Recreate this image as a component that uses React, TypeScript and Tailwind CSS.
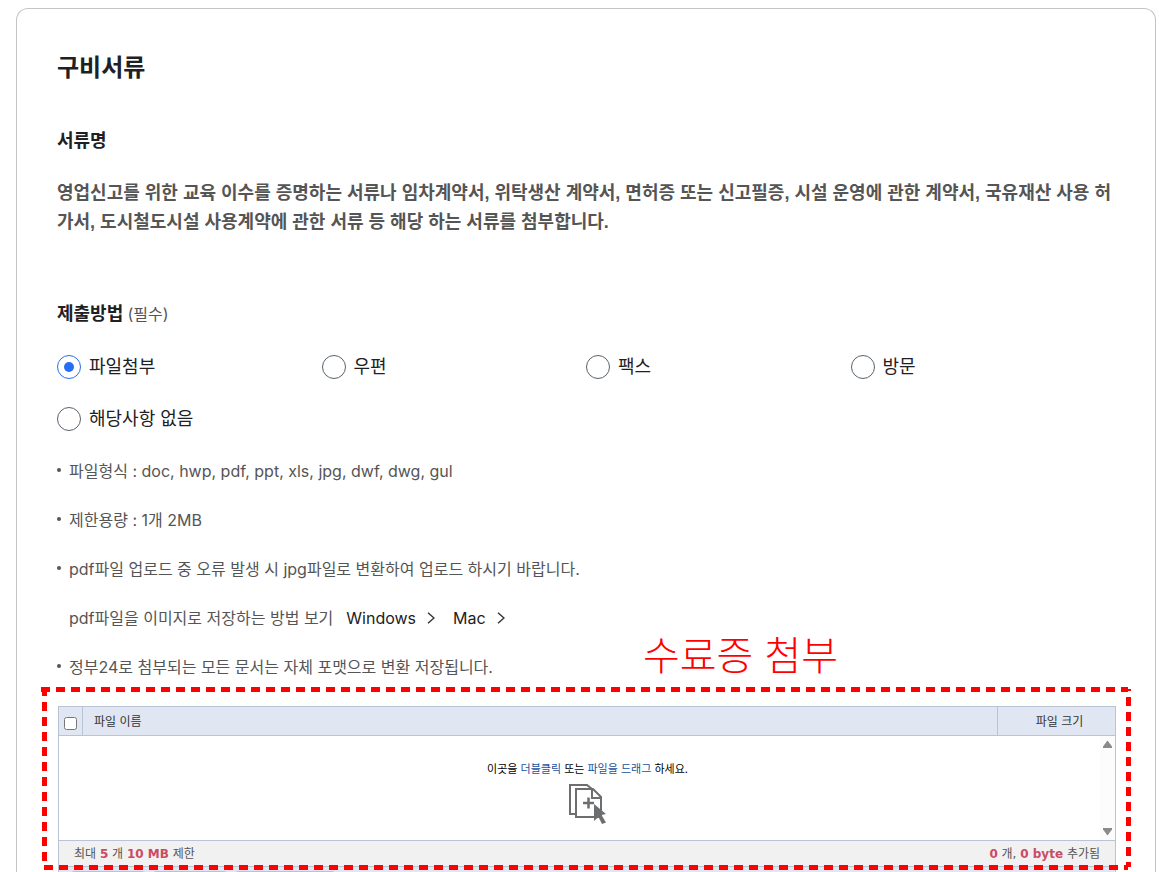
import { useState } from 'react'

const methods = [
  { id: 'file', label: '파일첨부' },
  { id: 'post', label: '우편' },
  { id: 'fax', label: '팩스' },
  { id: 'visit', label: '방문' },
  { id: 'none', label: '해당사항 없음' }
]

const Dot = () => <span className="mt-[9px] mr-2 size-1 shrink-0 rounded-full bg-[#555]"></span>

const Arrow = () => (
  <svg className="h-3 w-2" viewBox="0 0 8 12" fill="none" stroke="#33363d" strokeWidth="1.5">
    <path d="M1 0.7 L7 6 L1 11.3" />
  </svg>
)

const FileDropIcon = () => (
  <svg className="h-10 w-[38px]" viewBox="0 0 38 40" fill="none" stroke="#6d6e70" strokeWidth="2">
    <path d="M6 30 H1 V1 H18 L23 5" />
    <path d="M7 5 H24 L32 13 V33 H7 Z" fill="#fff" />
    <path d="M23 5 V14 H32" />
    <path d="M14 19 H25 M19.5 13.5 V24.5" strokeWidth="2.5" />
    <path d="M25 20 L37 30 L32.500 31 L37 38.500 L33 40 L29.500 33 L25 37 Z" fill="#6d6e70" stroke="none" />
  </svg>
)

const Uploader = () => {
  const [checked, setChecked] = useState(false)

  return (
    <div className="-mr-px ml-px border border-[#b9c3d6] text-xs">
      <div className="flex h-[29px] border-b border-[#b9c3d6] bg-[#e0e7f3] text-[#333]">
        <div className="flex w-6 shrink-0 items-end justify-center border-r border-[#b9c3d6] pb-[5px]">
          <input
            type="checkbox"
            aria-label="전체 선택"
            checked={checked}
            onChange={evt => setChecked(evt.target.checked)}
            className="size-[13px]"
          />
        </div>
        <div className="flex flex-grow items-center pt-px pl-[11px]">파일 이름</div>
        <div className="flex w-[118px] shrink-0 items-center justify-center border-l border-[#b9c3d6] pt-px pl-[6px]">
          파일 크기
        </div>
      </div>

      <div className="flex h-[104px]">
        <div className="flex flex-grow flex-col items-center pt-6 pl-4 text-black">
          <p className="text-[11px] leading-[18px]">
            이곳을 <span className="text-[#1352a2]">더블클릭</span> 또는 <span className="text-[#1352a2]">파일을 드래그</span>{' '}
            하세요.
          </p>
          <div className="mt-[6px]">
            <FileDropIcon />
          </div>
        </div>
        <div className="flex w-[15px] shrink-0 flex-col items-center justify-between bg-[#fcfcfc] py-1">
          <svg className="h-2 w-[9px]" viewBox="0 0 9 8" fill="#8a8a8a">
            <path d="M4.500 0.500 L9 6.500 V8 H0 V6.500 Z" />
          </svg>
          <svg className="h-2 w-[9px]" viewBox="0 0 9 8" fill="#8a8a8a">
            <path d="M4.500 7.500 L9 1.500 V0 H0 V1.500 Z" />
          </svg>
        </div>
      </div>

      <div className="flex h-[27px] items-center justify-between border-y border-[#b9c3d6] bg-[#f1f1f1] px-[15px] pt-px font-['DejaVu_Sans','Noto_Sans_CJK_KR',sans-serif] text-[#555]">
        <p>
          최대 <b className="text-[#cb4b63]">5</b> 개 <b className="text-[#cb4b63]">10 MB</b> 제한
        </p>
        <p>
          <b className="text-[#cb4b63]">0</b> 개, <b className="text-[#cb4b63]">0 byte</b> 추가됨
        </p>
      </div>

      <div className="flex h-8 gap-[6px] bg-[#e0e7f3] px-[11px] pt-1">
        <button aria-label="파일 추가" className="h-6 w-[76px] rounded-sm border border-[#b9c3d6]"></button>
        <button aria-label="폴더 추가" className="h-6 w-[76px] rounded-sm border border-[#b9c3d6]"></button>
        <button aria-label="항목 제거" className="h-6 w-[102px] rounded-sm border border-[#b9c3d6]"></button>
      </div>
    </div>
  )
}

// red dashed frame around the uploader
const Frame = () => (
  <svg
    className="pointer-events-none absolute -top-[17px] -left-[13px] h-[178px] w-[calc(100%+26px)] overflow-visible"
    stroke="#f00"
    strokeWidth="5"
    strokeDasharray="9 6"
    shapeRendering="crispEdges"
  >
    <line x1="-3" y1="0" x2="100%" y2="0" />
    <line x1="0" y1="-2" x2="0" y2="100%" />
    <line x1="0" y1="100%" x2="100%" y2="100%" />
    <line x1="100%" y1="0" x2="100%" y2="100%" strokeDashoffset="7" />
  </svg>
)

const App = () => {
  const [method, setMethod] = useState('file')

  return (
    <div className="h-screen overflow-hidden bg-white pt-2 pr-[3px] pl-4 font-['Inter','Noto_Sans_CJK_KR',sans-serif]">
      <section className="h-full rounded-t-xl border border-b-0 border-[#c4c4c4] px-10 pt-[41px] text-[#1e2124]">
        <h2 className="text-2xl leading-9 font-bold">구비서류</h2>

        <h3 className="mt-[41px] text-lg leading-7 font-bold">서류명</h3>
        <p className="mt-6 font-['Liberation_Sans','Noto_Sans_CJK_KR',sans-serif] text-lg leading-[29px] font-bold text-[#555]">
          영업신고를 위한 교육 이수를 증명하는 서류나 임차계약서, 위탁생산 계약서, 면허증 또는 신고필증, 시설 운영에 관한
          계약서, 국유재산 사용 허가서, 도시철도시설 사용계약에 관한 서류 등 해당 하는 서류를 첨부합니다.
        </p>

        <fieldset className="mt-[63px]">
          <legend className="text-lg leading-7 font-bold">
            제출방법 <span className="text-base font-normal text-[#555]">(필수)</span>
          </legend>
          <div className="mt-[25px] grid grid-cols-4 gap-y-6">
            {methods.map(item => (
              <label key={item.id} className="flex h-7 items-center gap-2 text-lg">
                <input
                  type="radio"
                  name="method"
                  checked={method === item.id}
                  onChange={() => setMethod(item.id)}
                  className="flex size-6 appearance-none items-center justify-center rounded-full border border-[#58616a] before:size-[10px] before:rounded-full checked:border-[#256ef4] checked:before:bg-[#256ef4]"
                />
                {item.label}
              </label>
            ))}
          </div>
        </fieldset>

        <ul className="mt-[26px] flex flex-col gap-[25px] text-base leading-6 text-[#555]">
          <li className="flex">
            <Dot />
            파일형식 : doc, hwp, pdf, ppt, xls, jpg, dwf, dwg, gul
          </li>
          <li className="flex">
            <Dot />
            제한용량 : 1개 2MB
          </li>
          <li className="flex">
            <Dot />
            pdf파일 업로드 중 오류 발생 시 jpg파일로 변환하여 업로드 하시기 바랍니다.
          </li>
          <li className="flex pl-3">
            pdf파일을 이미지로 저장하는 방법 보기
            <a href="#windows" className="ml-[13px] flex items-center gap-[11px] text-[#1e2124]">
              Windows <Arrow />
            </a>
            <a href="#mac" className="ml-[18px] flex items-center gap-[11px] text-[#1e2124]">
              Mac <Arrow />
            </a>
          </li>
          <li className="flex">
            <Dot />
            정부24로 첨부되는 모든 문서는 자체 포맷으로 변환 저장됩니다.
          </li>
        </ul>

        <div className="relative mt-[27px]">
          <Uploader />
          <Frame />
          <p className="absolute -top-[78px] left-[586px] font-['Liberation_Sans','Noto_Sans_CJK_KR',sans-serif] text-[40px] leading-[56px] font-light text-[#f00]">
            수료증 첨부
          </p>
        </div>
      </section>
    </div>
  )
}

export default App
